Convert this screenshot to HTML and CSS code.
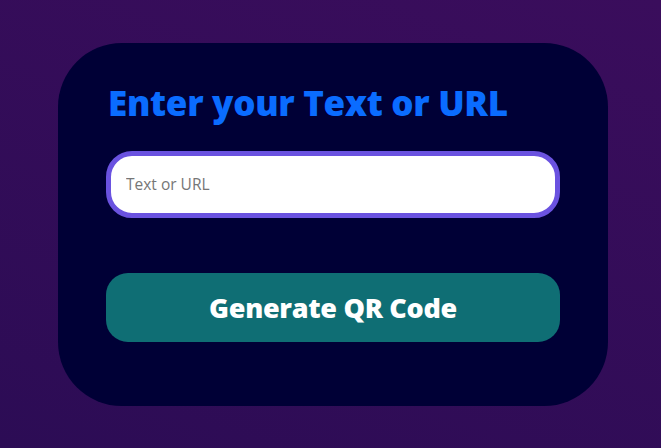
FILE: index.html
```html
<!DOCTYPE html>
<html lang="en">
<head>
<meta charset="utf-8">
<title>QR Code Generator</title>
<link rel="stylesheet" href="styles.css">
</head>
<body>
  <main class="card">
    <h1 class="title">Enter your Text or URL</h1>
    <input class="field" type="text" placeholder="Text or URL">
    <button class="generate" type="button">Generate QR Code</button>
  </main>
</body>
</html>
```

FILE: styles.css
```css
* { box-sizing: border-box; }
html, body { height: 100%; }
body {
  margin: 0;
  display: flex;
  align-items: center;
  justify-content: center;
  background: linear-gradient(20deg, #2c0c55 0%, #3a0d5c 100%);
  font-family: "Open Sans", "Noto Sans", sans-serif;
}
.card {
  width: 550px;
  height: 363px;
  margin-left: 5px;
  background: #000036;
  border-radius: 64px;
  padding: 39px 48px 0 48px;
  display: flex;
  flex-direction: column;
}
.title {
  margin: 0 0 27px 2px;
  color: #0a6cff;
  font-size: 35px;
  font-weight: 800;
  letter-spacing: -0.3px;
  line-height: 42px;
  white-space: nowrap;
}
.field {
  height: 67px;
  width: 100%;
  border: 5px solid #6a52e0;
  border-radius: 26px;
  padding: 0 15px;
  font-family: "Open Sans", sans-serif;
  font-size: 15.5px;
  color: #222;
  background: #fff;
  outline: none;
}
.field::placeholder { color: #767676; }
.generate {
  margin-top: 55px;
  height: 69px;
  width: 100%;
  border: none;
  border-radius: 22px;
  background: #0f6e74;
  color: #fff;
  font-family: "Open Sans", sans-serif;
  font-weight: 800;
  font-size: 27px;
  letter-spacing: -0.3px;
}
```
